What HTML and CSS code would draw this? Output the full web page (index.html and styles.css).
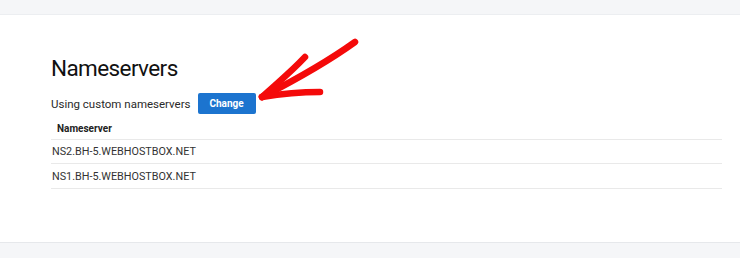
FILE: index.html
```html
<!DOCTYPE html>
<html>
<head>
<meta charset="utf-8">
<link rel="stylesheet" href="styles.css">
</head>
<body>
<div class="band top"></div>
<section class="card">
  <h1 class="title">Nameservers</h1>
  <div class="status">
    <span class="status-text">Using custom nameservers</span>
    <button class="btn">Change</button>
  </div>
  <table class="ns-table">
    <thead><tr><th>Nameserver</th></tr></thead>
    <tbody>
      <tr><td>NS2.BH-5.WEBHOSTBOX.NET</td></tr>
      <tr><td>NS1.BH-5.WEBHOSTBOX.NET</td></tr>
    </tbody>
  </table>
  <svg class="arrow" width="120" height="80" viewBox="0 0 120 80">
    <g fill="none" stroke="#f40a0a" stroke-width="6.5" stroke-linecap="round" stroke-linejoin="round">
      <path d="M105 7 C 80 25, 45 45, 12 62"/>
      <path d="M55 22 C 40 38, 25 50, 12 62"/>
      <path d="M12 62 C 30 59, 50 57, 70 57"/>
    </g>
  </svg>
</section>
<div class="band bottom"></div>
</body>
</html>
```
FILE: styles.css
```css
html, body {
  margin: 0;
  padding: 0;
  background: #ffffff;
  width: 740px;
  height: 258px;
  overflow: hidden;
  font-family: Roboto, "Liberation Sans", sans-serif;
}
.band {
  background: #f5f6f8;
}
.band.top {
  height: 14px;
  border-bottom: 1px solid #eceef1;
}
.band.bottom {
  height: 15px;
  border-top: 1px solid #e6e8eb;
}
.card {
  position: relative;
  height: 227px;
  box-sizing: border-box;
  padding: 39px 18px 0 51px;
  background: #fff;
}
.title {
  margin: 0;
  font-size: 22.5px;
  letter-spacing: -0.6px;
  font-weight: 400;
  color: #111;
  line-height: 28px;
  height: 30px;
}
.status {
  display: flex;
  align-items: center;
  gap: 7px;
  margin-top: 9px;
  height: 21px;
}
.status-text {
  font-size: 11.5px;
  color: #2a2a2a;
}
.btn {
  background: #1c74cf;
  color: #fff;
  border: none;
  border-radius: 2px;
  font-family: Roboto, "Liberation Sans", sans-serif;
  font-weight: 700;
  font-size: 10px;
  width: 58px;
  height: 21px;
  padding: 0;
}
.ns-table {
  width: 100%;
  border-collapse: collapse;
  margin-top: 4px;
}
.ns-table th {
  text-align: left;
  font-size: 10px;
  font-weight: 700;
  color: #222;
  padding: 0 0 0 6px;
  height: 21px;
  border-bottom: 1px solid #e9e9e9;
}
.ns-table td {
  font-size: 10.8px;
  color: #333;
  padding: 0 0 0 1px;
  height: 24px;
  border-bottom: 1px solid #e9e9e9;
}
.ns-table tbody tr:first-child td {
  height: 23px;
}
.arrow {
  position: absolute;
  left: 250px;
  top: 20px;
}
```
